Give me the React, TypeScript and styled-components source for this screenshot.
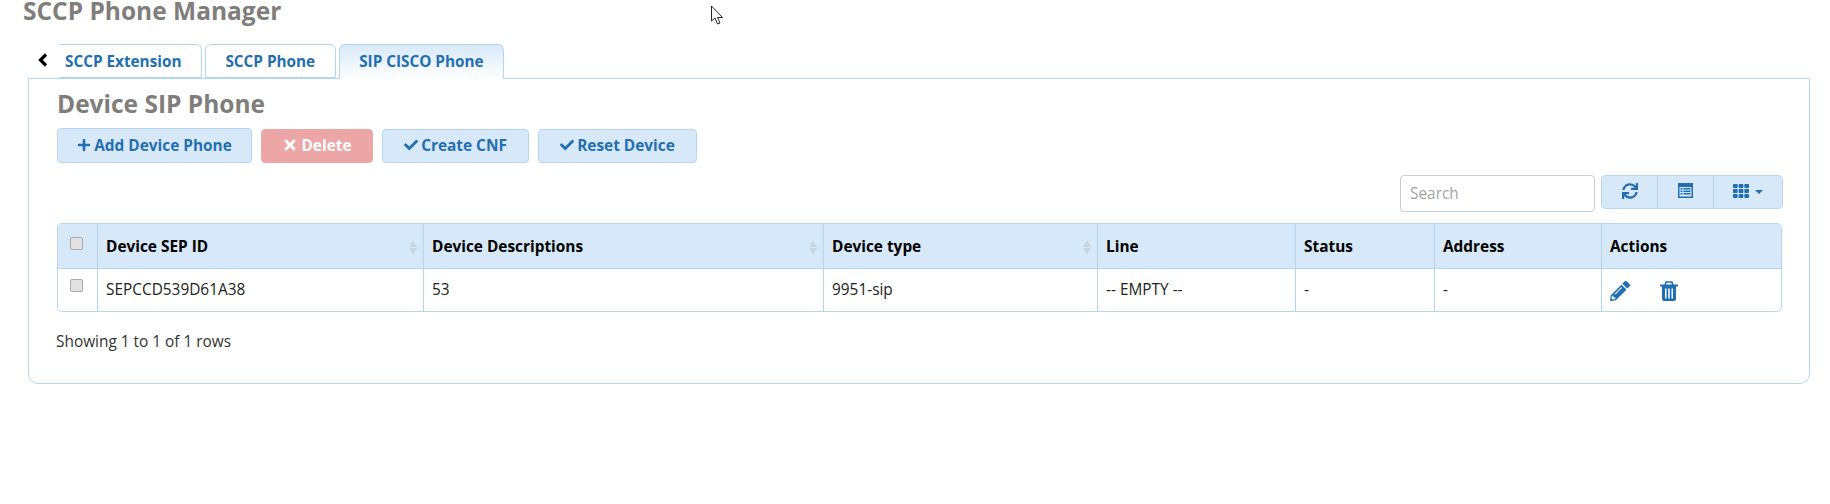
import React from "react"
import styled, { createGlobalStyle } from "styled-components"
import { FaCheck, FaPencilAlt, FaPlus, FaSync, FaTh, FaTimes } from "react-icons/fa"

const BLUE = "#1f6fb2"
const LINE = "#b3d7f2"
const LIGHT = "#d7e9f8"

const GlobalStyle = createGlobalStyle`
  html, body {
    margin: 0;
    background: #fff;
  }
  body {
    font-family: "Open Sans", "Liberation Sans", sans-serif;
    font-size: 15.4px;
    color: #222;
    overflow: hidden;
  }
`

const Page = styled.div`
  position: relative;
  width: 1830px;
  height: 504px;
  padding: 0 20px 0 28px;
  box-sizing: border-box;
  overflow: hidden;
`

const PageTitle = styled.h2`
  margin: 0 0 0 -5px;
  height: 44px;
  font-size: 24.5px;
  line-height: 21px;
  font-weight: 700;
  color: #807d7b;
`

const TabBar = styled.ul`
  position: relative;
  display: flex;
  height: 34px;
  margin: 0;
  padding: 0 0 0 31px;
  list-style: none;
`

const BackArrow = styled.svg`
  position: absolute;
  left: 10px;
  top: 9px;
`

const Tab = styled.li<{ $active?: boolean; $first?: boolean }>`
  box-sizing: border-box;
  height: ${p => (p.$active ? "35px" : "34px")};
  margin-right: 3px;
  padding: ${p => (p.$first ? "0 19.5px 0 6px" : "0 19.5px")};
  border: 1px solid ${LINE};
  border-bottom: ${p => (p.$active ? "none" : `1px solid ${LINE}`)};
  border-left: ${p => (p.$first ? "none" : `1px solid ${LINE}`)};
  border-radius: 6px 6px 0 0;
  border-top-left-radius: ${p => (p.$first ? "0" : "6px")};
  background: ${p => (p.$active ? `linear-gradient(${LIGHT}, #fff)` : "#fff")};
  color: ${BLUE};
  font-size: 15.3px;
  font-weight: 700;
  line-height: 32px;
  position: relative;
  z-index: 1;
`

const Panel = styled.section`
  box-sizing: border-box;
  height: 306px;
  width: 1782px;
  padding: 10px 26px 0 28px;
  border: 1px solid ${LINE};
  border-radius: 0 0 10px 10px;
`

const SectionTitle = styled.h3`
  margin: 0;
  height: 39px;
  font-size: 24.5px;
  line-height: 30px;
  font-weight: 700;
  color: #807d7b;
`

const Toolbar = styled.div`
  display: flex;
  align-items: center;
  gap: 9px;
`

const ActionButton = styled.button<{ $danger?: boolean; $w: number; $tall?: boolean }>`
  box-sizing: border-box;
  width: ${p => p.$w}px;
  height: ${p => (p.$tall ? "35px" : "34px")};
  padding: 0 0 1px;
  display: flex;
  align-items: center;
  justify-content: center;
  gap: 3px;
  border: 1px solid ${p => (p.$danger ? "#eca6a5" : LINE)};
  border-radius: 4px;
  background: ${p => (p.$danger ? "#eca6a5" : LIGHT)};
  color: ${p => (p.$danger ? "#fff" : BLUE)};
  font-family: inherit;
  font-size: 15.4px;
  font-weight: 700;

  svg {
    font-size: ${p => (p.$danger ? "16px" : "14px")};
  }
`

const TableTools = styled.div`
  display: flex;
  justify-content: flex-end;
  align-items: flex-start;
  gap: 6px;
  margin-top: 12px;
  height: 48px;
`

const SearchBox = styled.input`
  box-sizing: border-box;
  width: 195px;
  height: 37px;
  padding: 0 9px 1px;
  border: 1px solid #ccc;
  border-radius: 4px;
  font-family: inherit;
  font-size: 15.4px;

  &::placeholder {
    color: #a4a4a4;
  }
`

const ButtonGroup = styled.div`
  display: flex;
  height: 34px;
  box-sizing: border-box;
  border: 1px solid ${LINE};
  border-radius: 5px;
  background: ${LIGHT};
  color: ${BLUE};
`

const GroupButton = styled.div<{ $w: number }>`
  width: ${p => p.$w}px;
  display: flex;
  align-items: center;
  justify-content: center;
  gap: 6px;
  padding-bottom: 3px;
  box-sizing: border-box;
  font-size: 16px;

  & + & {
    border-left: 1px solid ${LINE};
  }
`

const Caret = styled.span`
  margin-top: 3px;
  border-top: 4px solid ${BLUE};
  border-left: 4px solid transparent;
  border-right: 4px solid transparent;
`

const TableFrame = styled.div`
  width: 1725px;
  box-sizing: border-box;
  border: 1px solid ${LINE};
  border-radius: 5px;
  overflow: hidden;
`

const Table = styled.table`
  width: 1723px;
  table-layout: fixed;
  border-collapse: collapse;
`

const Th = styled.th`
  height: 44px;
  padding: 0 8.5px;
  background: ${LIGHT};
  border-bottom: 1px solid ${LINE};
  border-left: 1px solid ${LINE};
  text-align: left;
  font-size: 15.4px;
  font-weight: 700;
  color: #000;
  vertical-align: middle;

  &:first-child {
    border-left: none;
    padding: 0 0 0 12px;
  }
`

const Td = styled.td`
  height: 42px;
  padding: 0 8.5px 0;
  border-left: 1px solid ${LINE};
  font-size: 15.4px;
  color: #222;
  box-sizing: border-box;

  &:first-child {
    border-left: none;
    padding: 0 0 3px 12px;
  }
`

const HeadInner = styled.div`
  display: flex;
  align-items: center;
  justify-content: space-between;
`

const SortArrows = styled.span`
  display: flex;
  flex-direction: column;
  gap: 1px;
  margin: 2px -3px 0 0;

  &::before,
  &::after {
    content: "";
    border-left: 4px solid transparent;
    border-right: 4px solid transparent;
  }
  &::before {
    border-bottom: 7px solid #c9d6e0;
  }
  &::after {
    border-top: 7px solid #c9d6e0;
  }
`

const Check = styled.input.attrs({ type: "checkbox" })`
  appearance: none;
  display: block;
  box-sizing: border-box;
  width: 13px;
  height: 13px;
  margin: 0 0 6px;
  border: 1px solid #aaa;
  border-radius: 2px;
  background: #e2e2e2;
`

const RowIcons = styled.div`
  display: flex;
  align-items: center;
  gap: 30px;
  color: ${BLUE};
  font-size: 20px;
  padding-top: 2px;
`

const Footer = styled.div`
  margin: 20px 0 0 -1px;
  font-size: 15.4px;
  line-height: 20px;
  color: #333;
`

const Cursor = styled.svg`
  position: absolute;
  left: 710px;
  top: 5px;
`

const columns = [
  { title: "Device SEP ID", width: 326, sortable: true },
  { title: "Device Descriptions", width: 400, sortable: true },
  { title: "Device type", width: 274, sortable: true },
  { title: "Line", width: 198 },
  { title: "Status", width: 139 },
  { title: "Address", width: 167 },
  { title: "Actions", width: 180 },
]

const row = ["SEPCCD539D61A38", "53", "9951-sip", "-- EMPTY --", "-", "-"]

const ListIcon = () => (
  <svg width="15" height="15" viewBox="0 0 15 15" fill="currentColor">
    <path d="M0 0h15v15H0zM1.5 4v9.5h12V4z" fillRule="evenodd" />
    <path d="M2.5 5h2v1.5h-2zM5.5 5h7v1.5h-7zM2.5 7.5h2V9h-2zM5.5 7.5h7V9h-7zM2.5 10h2v1.5h-2zM5.5 10h7v1.5h-7z" />
  </svg>
)

const TrashIcon = () => (
  <svg width="18" height="20" viewBox="0 0 18 20" fill="currentColor">
    <path d="M5 4 L6.2 1 H11.8 L13 4" fill="none" stroke="currentColor" strokeWidth="1.6" />
    <path d="M0 3.5h18v2H0z" />
    <path
      fillRule="evenodd"
      d="M2 5h14v13a2 2 0 0 1-2 2H4a2 2 0 0 1-2-2zM5 7.5v10h1.5v-10zM8.25 7.5v10h1.5v-10zM11.5 7.5v10H13v-10z"
    />
  </svg>
)

export default function App() {
  return (
    <Page>
      <GlobalStyle />
      <PageTitle>SCCP Phone Manager</PageTitle>
      <TabBar>
        <BackArrow width="10" height="14" viewBox="0 0 10 14">
          <path d="M8 1.5 L2.5 7 L8 12.5" fill="none" stroke="#000" strokeWidth="3.2" />
        </BackArrow>
        <Tab $first>SCCP Extension</Tab>
        <Tab>SCCP Phone</Tab>
        <Tab $active>SIP CISCO Phone</Tab>
      </TabBar>
      <Panel>
        <SectionTitle>Device SIP Phone</SectionTitle>
        <Toolbar>
          <ActionButton $w={195} $tall>
            <FaPlus /> Add Device Phone
          </ActionButton>
          <ActionButton $w={112} $danger>
            <FaTimes /> Delete
          </ActionButton>
          <ActionButton $w={147}>
            <FaCheck /> Create CNF
          </ActionButton>
          <ActionButton $w={159}>
            <FaCheck /> Reset Device
          </ActionButton>
        </Toolbar>
        <TableTools>
          <SearchBox placeholder="Search" />
          <ButtonGroup>
            <GroupButton $w={55}>
              <FaSync />
            </GroupButton>
            <GroupButton $w={56}>
              <ListIcon />
            </GroupButton>
            <GroupButton $w={69}>
              <FaTh />
              <Caret />
            </GroupButton>
          </ButtonGroup>
        </TableTools>
        <TableFrame>
          <Table>
            <colgroup>
              <col width={39} />
              {columns.map(c => (
                <col key={c.title} width={c.width} />
              ))}
            </colgroup>
            <thead>
              <tr>
                <Th>
                  <Check />
                </Th>
                {columns.map(c => (
                  <Th key={c.title}>
                    <HeadInner>
                      {c.title}
                      {c.sortable && <SortArrows />}
                    </HeadInner>
                  </Th>
                ))}
              </tr>
            </thead>
            <tbody>
              <tr>
                <Td>
                  <Check />
                </Td>
                {row.map((text, i) => (
                  <Td key={i}>{text}</Td>
                ))}
                <Td>
                  <RowIcons>
                    <FaPencilAlt />
                    <TrashIcon />
                  </RowIcons>
                </Td>
              </tr>
            </tbody>
          </Table>
        </TableFrame>
        <Footer>Showing 1 to 1 of 1 rows</Footer>
      </Panel>
      <Cursor width="14" height="21" viewBox="0 0 14 21">
        <path
          d="M1.5 1 L1.5 16 L5 13 L7.5 19 L10 18 L7.5 12.5 L12.5 12.5 Z"
          fill="#fff"
          stroke="#222"
          strokeWidth="1"
        />
      </Cursor>
    </Page>
  )
}
